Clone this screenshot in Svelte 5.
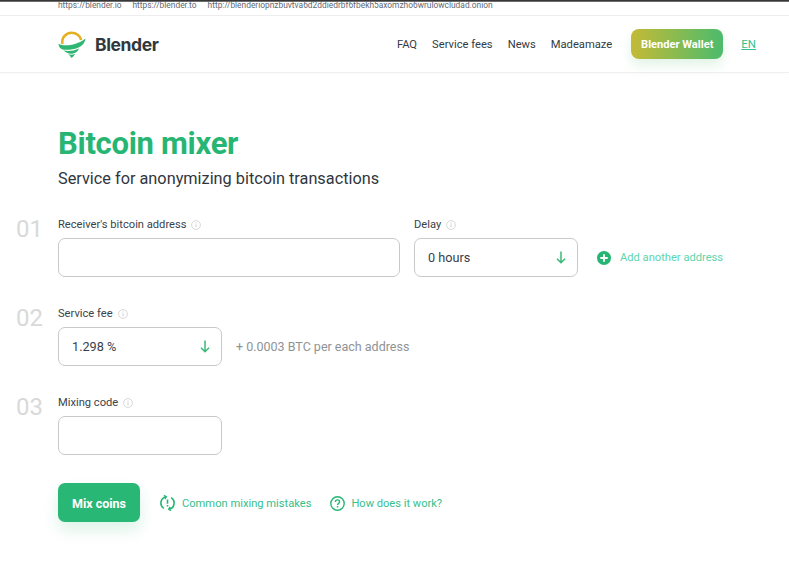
<script>
  const links = ['https://blender.io', 'https://blender.to', 'http://blenderiopnzbuvtva6d2ddiedrbf6fbekh5axomzho6wrulowcludad.onion'];
  const nav = ['FAQ', 'Service fees', 'News', 'Madeamaze'];
</script>

<div class="page">
  <div class="topline"></div>
  <div class="mirrors">
    {#each links as l}<span>{l}</span>{/each}
  </div>
  <header>
    <div class="logo">
      <svg width="28" height="27" viewBox="0 0 28 27">
        <path d="M4.500 13C3 7 8 1.800 13.500 1.800c4.700 0 8.700 3 9.700 7.200" fill="none" stroke="#e3b022" stroke-width="2.600"/>
        <path d="M.5 13C6 15.500 18 15 27.500 7.500C27 12 24 15 20 16.800C14 19 7 19.500 3.500 18C1.500 17 .7 15 .5 13z" fill="#2fb772"/>
        <path d="M5.500 19.500C10 20.500 16 20 21 17.500C20 20.500 17.500 22 15 22.500C11.500 23.200 8 22 5.500 19.500z" fill="#2fb772"/>
        <path d="M10 23.300C12.500 24 15 23.800 17 23C16.500 24.500 15 26 13 27C13 25.500 11.500 24.300 10 23.300z" fill="#2fb772"/>
      </svg>
      <span>Blender</span>
    </div>
    <nav>
      {#each nav as n}<span>{n}</span>{/each}
      <span class="wallet">Blender Wallet</span>
      <span class="lang">EN</span>
    </nav>
  </header>

  <main>
    <h1>Bitcoin mixer</h1>
    <p class="sub">Service for anonymizing bitcoin transactions</p>

    <section class="step">
      <div class="num">01</div>
      <div class="field wide">
        <div class="label">Receiver's bitcoin address {@render info()}</div>
        <div class="box"></div>
      </div>
      <div class="field mid">
        <div class="label">Delay {@render info()}</div>
        <div class="box select"><span>0 hours</span>{@render arrow()}</div>
      </div>
      <div class="add">
        <svg width="14" height="14" viewBox="0 0 14 14">
          <circle cx="7" cy="7" r="7" fill="#27b573"/>
          <path d="M7 3.300v7.400M3.300 7h7.400" stroke="#fff" stroke-width="1.800"/>
        </svg>
        <span>Add another address</span>
      </div>
    </section>

    <section class="step">
      <div class="num">02</div>
      <div class="field mid">
        <div class="label">Service fee {@render info()}</div>
        <div class="box select"><span>1.298 %</span>{@render arrow()}</div>
      </div>
      <div class="note">+ 0.0003 BTC per each address</div>
    </section>

    <section class="step">
      <div class="num">03</div>
      <div class="field mid">
        <div class="label">Mixing code {@render info()}</div>
        <div class="box"></div>
      </div>
    </section>

    <div class="actions">
      <div class="mix">Mix coins</div>
      <div class="help first">
        <svg width="15" height="16" viewBox="0 0 15 16" fill="none" stroke="#27b573" stroke-width="1.600">
          <path d="M6 1.700A6.400 6.400 0 0 0 3.800 13.300"/>
          <path d="M9 14.300A6.400 6.400 0 0 0 11.200 2.700"/>
          <path d="M3.900 .4L6.300 1.700L4.800 4M11.100 15.600L8.700 14.300L10.200 12" stroke-width="1.400"/>
          <path d="M7.500 4.600v4.200M7.500 10v1.500"/>
        </svg>
        <span>Common mixing mistakes</span>
      </div>
      <div class="help">
        <svg width="15" height="15" viewBox="0 0 15 15" fill="none" stroke="#27b573" stroke-width="1.400">
          <circle cx="7.500" cy="7.500" r="6.700"/>
          <path d="M5.400 5.900c0-1.200 1-2 2.100-2s2.100.8 2.100 1.900c0 1.500-2.100 1.600-2.100 3.300M7.500 10v1.400"/>
        </svg>
        <span>How does it work?</span>
      </div>
    </div>
  </main>
</div>

{#snippet info()}
  <svg class="info" width="10" height="10" viewBox="0 0 10 10" fill="none">
    <circle cx="5" cy="5" r="4.400" stroke="#d4d4d4" stroke-width=".9"/>
    <path d="M5 4.300v3M5 2.500v1" stroke="#cfcfcf"/>
  </svg>
{/snippet}

{#snippet arrow()}
  <svg width="10" height="13" viewBox="0 0 10 13" fill="none" stroke="#3cb878" stroke-width="1.500">
    <path d="M5 .5v11.300M1 7.800l4 4 4-4"/>
  </svg>
{/snippet}

<style>
  :global(body) { margin: 0; background: #fff; }
  .page {
    width: 789px; height: 563px; overflow: hidden;
    font-family: Roboto, sans-serif; color: #333b43; background: #fff;
  }
  .topline { height: 2px; background: linear-gradient(#1c1c1c, #888); }
  .mirrors {
    height: 13px; display: flex; gap: 11px; padding-left: 58px;
    font-size: 8.400px; line-height: 7px; color: #5f6872; border-bottom: 1px solid #eee;
  }
  header {
    height: 56px; display: flex; align-items: center; justify-content: space-between;
    padding: 0 33px 0 58px; border-bottom: 1px solid #efefef;
    box-shadow: 0 2px 4px rgba(0,0,0,.015);
  }
  .logo { display: flex; align-items: center; gap: 9px; }
  .logo span { font-family: Inter, sans-serif; font-size: 17.500px; font-weight: 700; color: #31383c; letter-spacing: -.4px; }
  nav { display: flex; align-items: center; font-size: 11.200px; color: #333b43; }
  nav span { margin-right: 15px; }
  nav .wallet {
    width: 92px; height: 30px; margin: 0 18px 0 4px; border-radius: 8px;
    display: flex; align-items: center; justify-content: center;
    font-size: 11.100px; font-weight: 700; color: #fff;
    background: linear-gradient(90deg, #c4ba36, #4cbb6c);
    box-shadow: 0 6px 12px rgba(90,190,110,.18);
  }
  nav .lang { margin: 0; font-size: 11.500px; color: #35c08c; text-decoration: underline; }
  main { padding: 0 0 0 16px; }
  h1 {
    margin: 52px 0 0 42px; font-size: 31px; line-height: 38px; font-weight: 700;
    color: #27b573; letter-spacing: -.3px;
  }
  .sub { margin: 5px 0 0 42px; font-size: 16.300px; line-height: 22px; color: #2f363d; }
  .step { display: flex; align-items: flex-end; height: 60px; margin-top: 29px; position: relative; }
  .step:first-of-type { margin-top: 27px; }
  .num {
    position: absolute; left: 0; top: -3px; font-size: 24px; line-height: 30px;
    color: #d9d9d9; font-weight: 400;
  }
  .field { margin-left: 42px; }
  .field + .field { margin-left: 14px; }
  .label { font-size: 11.150px; line-height: 13px; color: #3a424a; margin-bottom: 7px; display: flex; align-items: center; gap: 5px; }
  .info { flex: none; margin-top: 1px; }
  .box {
    box-sizing: border-box; height: 39px; border: 1px solid #c9c9c9; border-radius: 7px;
    display: flex; align-items: center; justify-content: space-between; padding: 0 7px 0 13px;
    font-size: 12.700px; color: #38404a;
  }
  .box svg { margin-right: 4px; }
  .wide .box { width: 342px; }
  .mid .box { width: 164px; }
  .add {
    display: flex; align-items: center; gap: 9px; height: 39px; margin-left: 19px;
    font-size: 11.150px; color: #5ed4ac;
  }
  .note { height: 39px; line-height: 39px; margin-left: 14px; font-size: 12.500px; color: #8f9396; }
  .actions { display: flex; align-items: center; margin: 28px 0 0 42px; }
  .mix {
    box-sizing: border-box; padding-top: 1px;
    width: 82px; height: 39px; border-radius: 7px; background: #29b775; color: #fff;
    font-size: 12.500px; font-weight: 700; display: flex; align-items: center; justify-content: center;
    box-shadow: 0 8px 16px rgba(40,180,115,.16);
  }
  .help { display: flex; align-items: center; gap: 6px; font-size: 11.100px; color: #35c08c; margin-left: 19px; padding-top: 1px; }
  .help.first { margin-left: 20px; gap: 7px; font-size: 11.150px; }
</style>
